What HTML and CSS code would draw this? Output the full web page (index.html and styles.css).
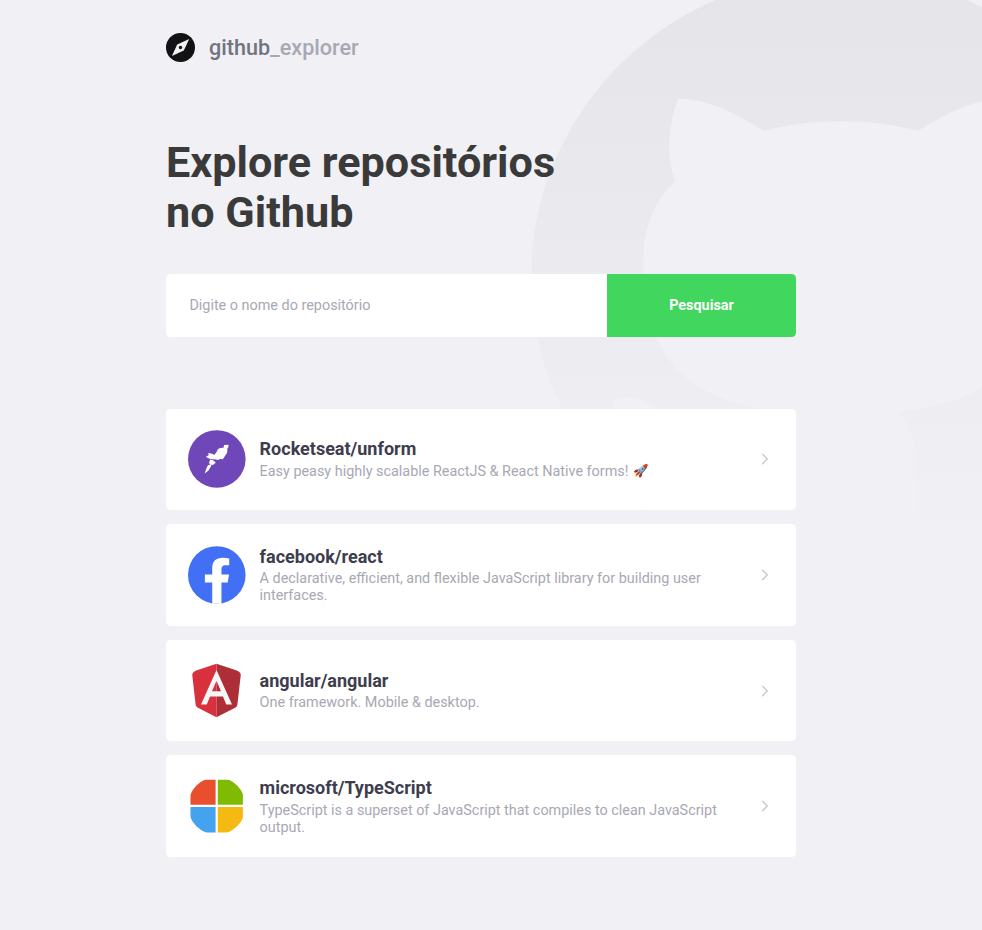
FILE: index.html
```html
<!DOCTYPE html>
<html lang="pt-BR">
<head>
<meta charset="utf-8">
<title>Github Explorer</title>
<link rel="stylesheet" href="styles.css">
</head>
<body>
<svg class="backdrop" viewBox="531 0 451 580" aria-hidden="true">
  <defs><linearGradient id="fade" gradientUnits="userSpaceOnUse" x1="0" y1="-26" x2="0" y2="546"><stop offset="0" stop-color="#e4e4e9"/><stop offset="1" stop-color="#f0f0f5"/></linearGradient></defs>
  <path fill="url(#fade)" d="M841-26A310 303 0 0 0 531 277A310 303 0 0 0 743 564L763 548V531C680 547 645 515 642 505C638 490 635 430 617 411C613 407 612 403 614 401C617 397 625 397 630 397C640 398 650 403 657 409C690 430 685 500 767 478C768 450 774 425 785 412C712 404 643 378 643 264C643 228 655 200 675 181C672 172 662 145 678 99C694 98 720 103 764 131C810 118 872 118 918 131C962 103 988 98 1004 99C1020 145 1010 172 1007 181C1027 200 1039 228 1039 264C1039 378 970 404 897 412C911 424 917 445 917 467V545L939 564A310 303 0 0 0 1151 277A310 303 0 0 0 841-26z"/>
</svg>
<main class="page">
  <header class="brand">
    <svg class="brand-icon" viewBox="0 0 29 29"><circle cx="14.5" cy="14.5" r="14.5" fill="#121214"/><path d="M23.200 6 17.800 17.600 5.900 23.100 11.200 11.400z" fill="#f0f0f5"/><circle cx="14.500" cy="14.500" r="1.700" fill="#121214"/></svg>
    <span class="brand-name">github<span class="brand-light">_explorer</span></span>
  </header>
  <h1 class="title">Explore repositórios<br>no Github</h1>
  <form class="search">
    <input class="search-input" placeholder="Digite o nome do repositório">
    <button class="search-button" type="button">Pesquisar</button>
  </form>
  <section class="repos">
    <a class="repo">
      <svg class="avatar" viewBox="0 0 58 58"><circle cx="29" cy="29" r="29" fill="#7047b8"/><path fill="#fff" transform="translate(10.4 6) scale(.3333)" d="M78 27 91 26V33L88 37 87 50 80 61 74 70 65 69 60 72 50 70 48 71 38 69 30 67 23 62 32 57 29 51 42 53 48 57 55 48 59 40 66 36 76 35zM36 71 44 73 53 80 44 87 40 86 38 92 30 105 19 113 25 96 29 88 37 86 32 81z"/></svg>
      <div class="info"><strong class="name">Rocketseat/unform</strong><p class="desc">Easy peasy highly scalable ReactJS &amp; React Native forms! <span class="emoji">🚀</span></p></div>
      <svg class="chevron" viewBox="0 0 18 18"><path d="m6.600 4.400 4.700 4.700-4.700 4.700"/></svg>
    </a>
    <a class="repo">
      <svg class="avatar" viewBox="0 0 58 58"><circle cx="29" cy="29" r="29" fill="#4270f4"/><path fill="#fff" d="M24.400 58V36.500H17v-8h7.400v-6.200c0-7 4-10.500 10.500-10.500 2.500 0 4.600.2 6.600.6v6.800h-3.600c-3.300 0-4.200 1.600-4.200 4.300v5h7.600l-1.300 8h-6.300V58z"/></svg>
      <div class="info"><strong class="name">facebook/react</strong><p class="desc">A declarative, efficient, and flexible JavaScript library for building user interfaces.</p></div>
      <svg class="chevron" viewBox="0 0 18 18"><path d="m6.600 4.400 4.700 4.700-4.700 4.700"/></svg>
    </a>
    <a class="repo">
      <svg class="avatar" viewBox="0 0 58 58"><path fill="#d9303e" d="M28.700 1.700 9 8.200Q3.900 10 4.300 13.200L7.700 43Q8 44.800 9.500 45.700L28.700 55.500z"/><path fill="#ad2e37" d="M28.700 1.700 48.400 8.200Q53.500 10 53.100 13.200L49.700 43Q49.400 44.800 47.900 45.700L28.700 55.500z"/><path fill="#f5f5f5" fill-rule="evenodd" d="M28.700 7.900 13.100 42.600h5.800l3.300-8h13l3.300 8h5.800zm0 10.800 4.500 10.600h-9z"/></svg>
      <div class="info"><strong class="name">angular/angular</strong><p class="desc">One framework. Mobile &amp; desktop.</p></div>
      <svg class="chevron" viewBox="0 0 18 18"><path d="m6.600 4.400 4.700 4.700-4.700 4.700"/></svg>
    </a>
    <a class="repo">
      <svg class="avatar" viewBox="0 0 58 58"><defs><clipPath id="round"><circle cx="29" cy="29" r="29"/></clipPath></defs><g clip-path="url(#round)"><path fill="#e84f2e" d="M2.500 2.500h25.300v25.300H2.500z"/><path fill="#80bb03" d="M30 2.500h25.300v25.300H30z"/><path fill="#45a2ef" d="M2.500 30h25.300v25.700H2.500z"/><path fill="#f5ba12" d="M30 30h25.300v25.700H30z"/></g></svg>
      <div class="info"><strong class="name">microsoft/TypeScript</strong><p class="desc">TypeScript is a superset of JavaScript that compiles to clean JavaScript output.</p></div>
      <svg class="chevron" viewBox="0 0 18 18"><path d="m6.600 4.400 4.700 4.700-4.700 4.700"/></svg>
    </a>
  </section>
</main>
</body>
</html>
```
FILE: styles.css
```css
* { box-sizing: border-box; margin: 0; padding: 0; }
body {
  position: relative;
  min-height: 930px;
  background: #f0f0f5;
  font-family: Roboto, "Liberation Sans", sans-serif;
  font-size: 14.4px;
}
.backdrop { position: absolute; z-index: -1; right: 0; top: 0; width: 451px; height: 580px; }
.page { width: 630px; margin-left: 166px; padding-top: 33px; }
.brand { display: flex; align-items: center; gap: 14px; height: 29px; }
.brand-icon { width: 29px; height: 29px; }
.brand-name { font-size: 21.6px; font-weight: 500; line-height: 29px; color: #737380; }
.brand-light { color: #a8a8b3; }
.title { margin-top: 76px; font-size: 43.2px; line-height: 50px; font-weight: 700; color: #3a3a3a; }
.search { display: flex; height: 63px; margin-top: 36px; }
.search-input {
  flex: 1;
  min-width: 0;
  padding: 0 23.4px;
  border: 0;
  border-radius: 4.5px 0 0 4.5px;
  background: #fff;
  font: 14.4px Roboto, sans-serif;
  color: #3a3a3a;
}
.search-input::placeholder { color: #a8a8b3; }
.search-button {
  width: 189px;
  border: 0;
  border-radius: 0 4.5px 4.5px 0;
  background: #41d65d;
  color: #fff;
  font: 700 14.4px Roboto, sans-serif;
}
.repos { display: flex; flex-direction: column; gap: 14.23px; margin-top: 71.58px; }
.repo {
  display: flex;
  align-items: center;
  height: 101.4px;
  padding: 21.6px;
  border-radius: 4.5px;
  background: #fff;
}
.avatar { flex: none; width: 57.6px; height: 57.9px; overflow: visible; }
.info { flex: 1; margin: 0 14.4px; }
.name { display: block; font-size: 18px; line-height: 21px; color: #3d3d4d; }
.desc { margin: 3.83px 0 -0.18px; line-height: 17px; color: #a8a8b3; }
.emoji { position: relative; top: -1px; margin-left: 1px; font-size: 12.4px; line-height: 1; }
.chevron { flex: none; width: 18px; height: 17.8px; fill: none; stroke: #cbcbd6; stroke-width: 1.5; stroke-linecap: round; stroke-linejoin: round; }
```
